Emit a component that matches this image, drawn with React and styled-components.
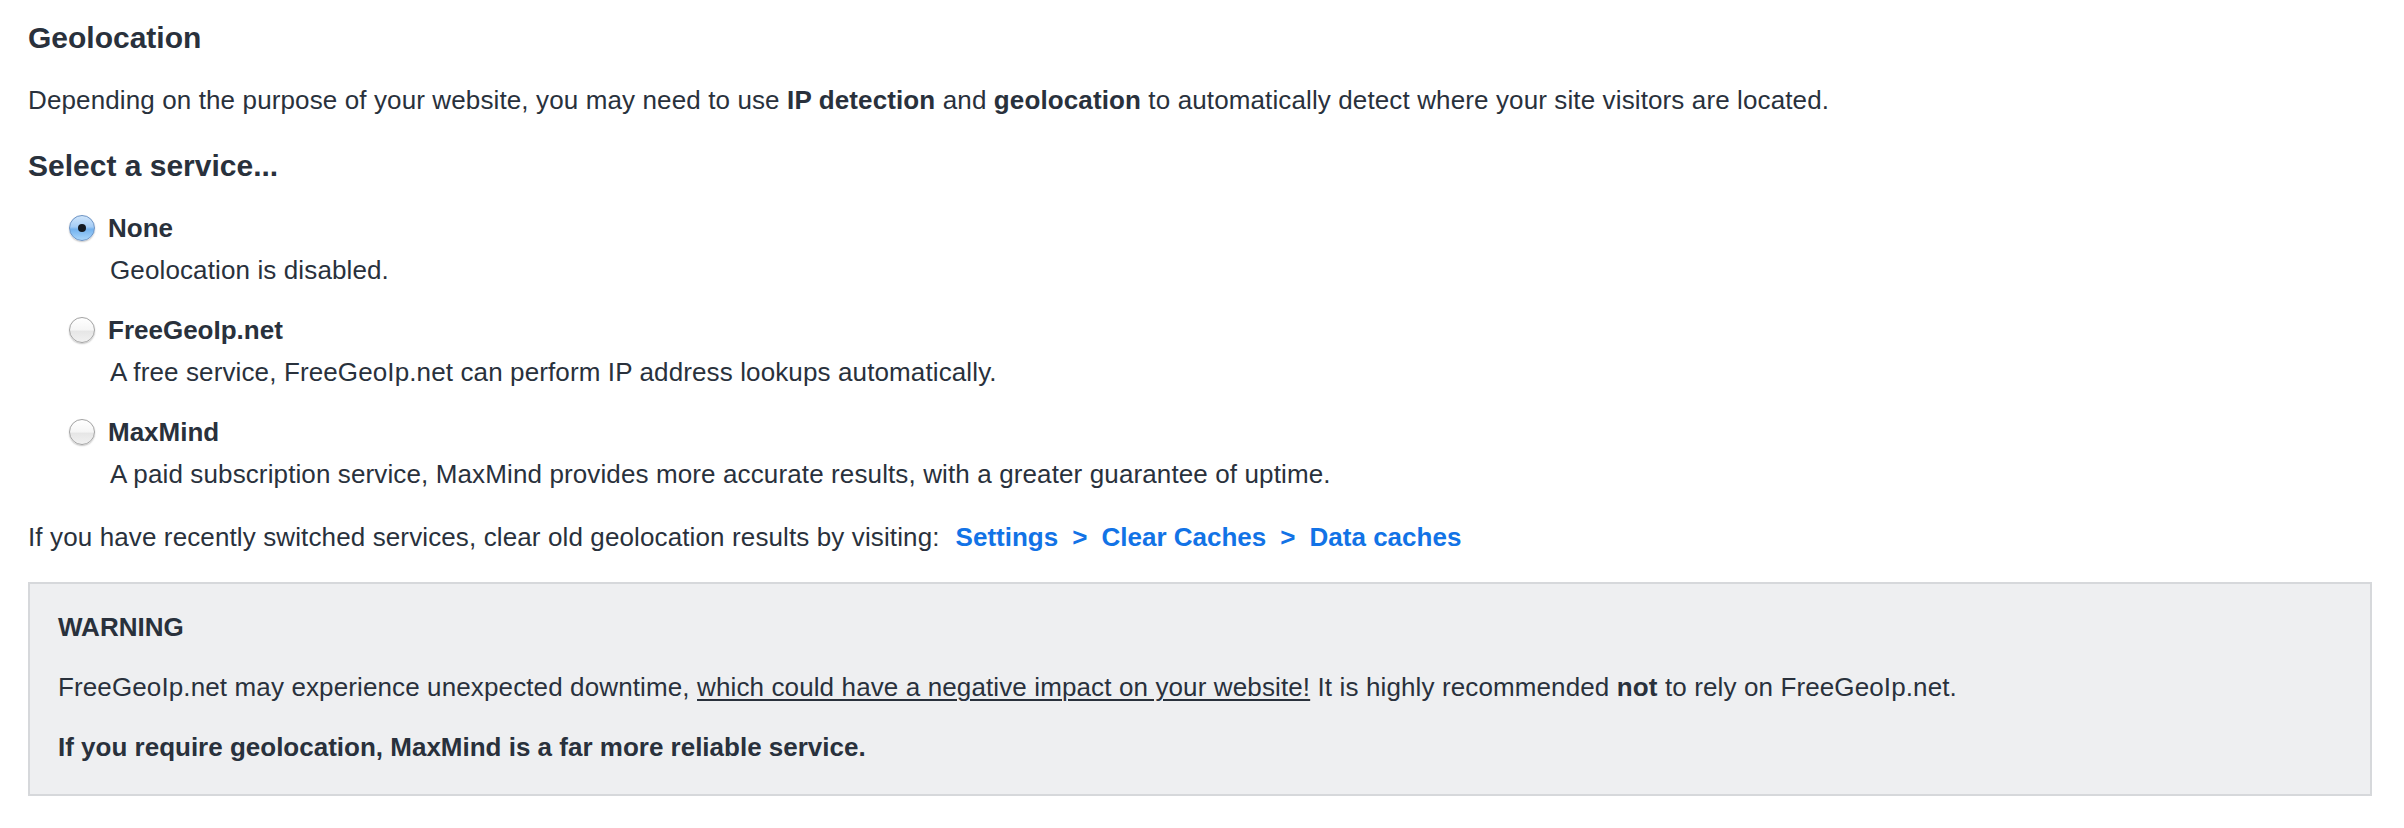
import React, { useState } from "react";
import styled, { createGlobalStyle } from "styled-components";

// =============================
// Global
// =============================
const GlobalStyle = createGlobalStyle`
  html, body {
    margin: 0;
    padding: 0;
    background: #fff;
  }
  body {
    font-family: "Liberation Sans", Arial, Helvetica, sans-serif;
    color: #29313c;
    -webkit-font-smoothing: antialiased;
  }
`;

const Page = styled.div`
  padding: 18px 32px 30px 28px;
`;

const Title = styled.h2`
  margin: 0;
  font-size: 30px;
  line-height: 40px;
  font-weight: 700;
`;

const Text = styled.p`
  margin: ${({ $mt }) => $mt || "0"} 0 0;
  font-size: 26px;
  line-height: 36px;
  letter-spacing: 0.12px;
`;

const SubTitle = styled.h3`
  margin: 28px 0 0;
  font-size: 30px;
  line-height: 40px;
  font-weight: 700;
`;

// =============================
// Radios
// =============================
const Options = styled.div`
  display: flex;
  flex-direction: column;
  gap: 24px;
  margin-top: 24px;
  padding-left: 41px;
`;

const Option = styled.label`
  display: grid;
  grid-template-columns: 26px 1fr;
  column-gap: 13px;
  row-gap: 6px;
  align-items: center;
  cursor: pointer;
`;

const Radio = styled.span`
  width: 26px;
  height: 26px;
  box-sizing: border-box;
  border-radius: 50%;
  position: relative;
  border: 1.5px solid ${({ $on }) => ($on ? "#6c93c4" : "#a3a3a3")};
  background: ${({ $on }) =>
    $on
      ? "linear-gradient(to bottom, #cfe5fb 0%, #a6cdf5 45%, #74b2ee 55%, #a9d6fb 100%)"
      : "linear-gradient(to bottom, #ffffff 0%, #f5f5f5 50%, #e6e6e6 55%, #f1f1f1 100%)"};
  box-shadow: 0 1px 1.5px rgba(0, 0, 0, 0.22);

  &::after {
    content: "";
    display: ${({ $on }) => ($on ? "block" : "none")};
    position: absolute;
    left: 50%;
    top: 50%;
    width: 8px;
    height: 8px;
    margin: -4px 0 0 -4px;
    border-radius: 50%;
    background: #141a22;
  }
`;

const OptionName = styled.span`
  font-size: 26px;
  line-height: 36px;
  font-weight: 700;
`;

const OptionDesc = styled.span`
  grid-column: 2;
  font-size: 26px;
  line-height: 36px;
  letter-spacing: 0.12px;
  padding-left: 2px;
`;

// =============================
// Breadcrumb
// =============================
const Crumb = styled.a`
  color: #1273e6;
  font-weight: 700;
  letter-spacing: 0;
  text-decoration: none;
  margin-left: ${({ $first }) => ($first ? "16px" : "0")};
`;

const Sep = styled.span`
  color: #1273e6;
  font-weight: 700;
  margin: 0 14px;
`;

// =============================
// Warning box
// =============================
const Warning = styled.div`
  margin-top: 27px;
  background: #eeeff1;
  border: 2px solid #d6d8db;
  padding: 25px 28px 29px;
  display: flex;
  flex-direction: column;
  gap: 24px;
`;

const WarnHead = styled.div`
  font-size: 26px;
  line-height: 36px;
  font-weight: 700;
`;

const WarnText = styled.div`
  font-size: 26px;
  line-height: 36px;
  font-weight: ${({ $bold }) => ($bold ? 700 : 400)};
  letter-spacing: ${({ $bold }) => ($bold ? "0" : "0.12px")};

  u {
    text-decoration-thickness: 2px;
    text-underline-offset: 3px;
  }
`;

const services = [
  { id: "none", name: "None", desc: "Geolocation is disabled." },
  {
    id: "freegeoip",
    name: "FreeGeoIp.net",
    desc: "A free service, FreeGeoIp.net can perform IP address lookups automatically.",
  },
  {
    id: "maxmind",
    name: "MaxMind",
    desc: "A paid subscription service, MaxMind provides more accurate results, with a greater guarantee of uptime.",
  },
];

export default function App() {
  const [service, setService] = useState("none");

  return (
    <>
      <GlobalStyle />
      <Page>
        <Title>Geolocation</Title>
        <Text $mt="24px">
          Depending on the purpose of your website, you may need to use <b>IP detection</b> and{" "}
          <b>geolocation</b> to automatically detect where your site visitors are located.
        </Text>

        <SubTitle>Select a service...</SubTitle>
        <Options>
          {services.map((s) => (
            <Option key={s.id} onClick={() => setService(s.id)}>
              <Radio $on={service === s.id} />
              <OptionName>{s.name}</OptionName>
              <OptionDesc>{s.desc}</OptionDesc>
            </Option>
          ))}
        </Options>

        <Text $mt="27px">
          If you have recently switched services, clear old geolocation results by visiting:
          <Crumb $first href="#">Settings</Crumb>
          <Sep>&gt;</Sep>
          <Crumb href="#">Clear Caches</Crumb>
          <Sep>&gt;</Sep>
          <Crumb href="#">Data caches</Crumb>
        </Text>

        <Warning>
          <WarnHead>WARNING</WarnHead>
          <WarnText>
            FreeGeoIp.net may experience unexpected downtime,{" "}
            <u>which could have a negative impact on your website!</u> It is highly recommended{" "}
            <b>not</b> to rely on FreeGeoIp.net.
          </WarnText>
          <WarnText $bold>If you require geolocation, MaxMind is a far more reliable service.</WarnText>
        </Warning>
      </Page>
    </>
  );
}
